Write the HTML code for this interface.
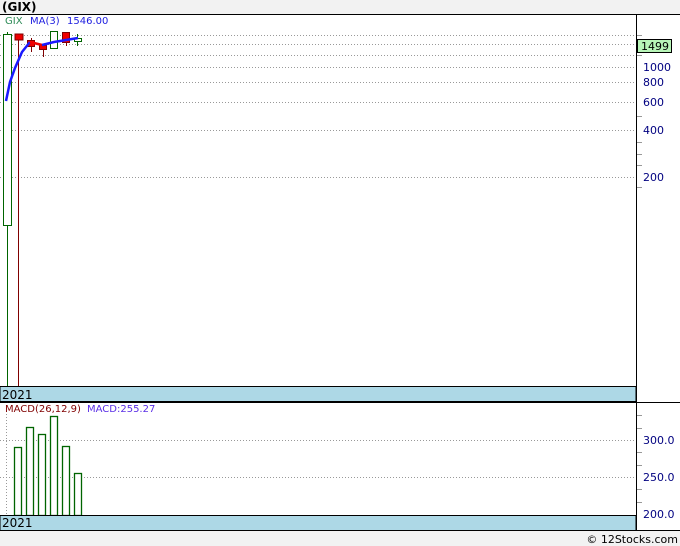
<!DOCTYPE html><html><head><style>html,body{margin:0;background:#f2f2f2;width:680px;height:546px;overflow:hidden}svg{display:block}</style></head><body>
<svg width="680" height="546" xmlns="http://www.w3.org/2000/svg" font-family="DejaVu Sans, sans-serif">
<rect x="0" y="0" width="680" height="546" fill="#f2f2f2"/>
<text x="2" y="11" font-size="12" font-weight="bold" fill="#000">(GIX)</text>
<rect x="0" y="14" width="680" height="516" fill="#fff"/>
<g stroke="#999" stroke-dasharray="1,2" stroke-width="1">
<line x1="0" x2="636" y1="35.5" y2="35.5"/><line x1="0" x2="636" y1="44.5" y2="44.5"/><line x1="0" x2="636" y1="55.5" y2="55.5"/><line x1="0" x2="636" y1="67.5" y2="67.5"/><line x1="0" x2="636" y1="82.5" y2="82.5"/><line x1="0" x2="636" y1="102.5" y2="102.5"/><line x1="0" x2="636" y1="130.5" y2="130.5"/><line x1="0" x2="636" y1="177.5" y2="177.5"/>
<line x1="0" x2="636" y1="440.5" y2="440.5"/><line x1="0" x2="636" y1="477.5" y2="477.5"/>
<line x1="6.5" x2="6.5" y1="402" y2="515"/>
</g>
<g stroke="#999"><line x1="636" x2="642" y1="35.5" y2="35.5"/><line x1="636" x2="642" y1="55.5" y2="55.5"/><line x1="636" x2="642" y1="116.5" y2="116.5"/><line x1="636" x2="642" y1="142.5" y2="142.5"/><line x1="636" x2="642" y1="154.5" y2="154.5"/><line x1="636" x2="642" y1="165.5" y2="165.5"/><line x1="636" x2="642" y1="187.5" y2="187.5"/>
<line x1="636" x2="642" y1="415.5" y2="415.5"/><line x1="636" x2="642" y1="428.5" y2="428.5"/><line x1="636" x2="642" y1="452.5" y2="452.5"/><line x1="636" x2="642" y1="465.5" y2="465.5"/><line x1="636" x2="642" y1="489.5" y2="489.5"/><line x1="636" x2="642" y1="502.5" y2="502.5"/></g>
<g font-size="11" fill="#000080">
<text x="643" y="71">1000</text><text x="643" y="86">800</text><text x="643" y="106">600</text><text x="643" y="134">400</text><text x="643" y="181">200</text>
<text x="643" y="444">300.0</text><text x="643" y="481">250.0</text><text x="643" y="518">200.0</text></g>
<rect x="637.5" y="39.5" width="34" height="13" fill="#b8f5b8" stroke="#000"/>
<text x="641" y="50" font-size="11" fill="#000">1499</text>
<text x="5" y="24" font-size="10" fill="#2e8b57">GIX</text>
<text x="30" y="24" font-size="10" fill="#2020e0">MA(3)</text>
<text x="67" y="24" font-size="10" fill="#2020e0">1546.00</text>
<line x1="7.5" x2="7.5" y1="32" y2="386" stroke="#006400"/>
<rect x="3.5" y="34.5" width="8" height="191" fill="#fff" stroke="#006400"/>
<line x1="18.5" x2="18.5" y1="34" y2="386" stroke="#800000"/>
<rect x="15" y="34" width="8" height="6" fill="#e00" stroke="#800000"/>
<line x1="31.5" x2="31.5" y1="38" y2="52" stroke="#800000"/>
<rect x="27.5" y="40.5" width="7" height="6" fill="#e00" stroke="#800000"/>
<line x1="43.5" x2="43.5" y1="44" y2="57" stroke="#800000"/>
<rect x="39.5" y="45.5" width="7" height="4" fill="#e00" stroke="#800000"/>
<rect x="50.5" y="31.5" width="7" height="17" fill="#fff" stroke="#006400"/>
<line x1="66.5" x2="66.5" y1="32" y2="46" stroke="#800000"/>
<rect x="62.5" y="32.5" width="7" height="10" fill="#e00" stroke="#800000"/>
<line x1="77.5" x2="77.5" y1="34" y2="46" stroke="#006400"/>
<rect x="74.5" y="38.5" width="7" height="3" fill="#fff" stroke="#006400"/>
<polyline points="6,101 10,82 15,68 22,52 30,42" fill="none" stroke="#1a1aff" stroke-width="2.5"/>
<polyline points="30,42 42,45" fill="none" stroke="#e00" stroke-width="2.5"/>
<polyline points="42,45 54,42 66,40 78,38" fill="none" stroke="#1a1aff" stroke-width="2.5"/>
<g fill="#fff" stroke="#006400" stroke-width="1.3">
<rect x="14.5" y="447.5" width="7" height="68"/><rect x="26.5" y="427.5" width="7" height="88"/><rect x="38.5" y="434.5" width="7" height="81"/><rect x="50.5" y="416.5" width="7" height="99"/><rect x="62.5" y="446.5" width="7" height="69"/><rect x="74.5" y="473.5" width="7" height="42"/></g>
<text x="5" y="412" font-size="10" fill="#800000">MACD(26,12,9)</text>
<text x="87" y="412" font-size="10" fill="#5a2ee6">MACD:255.27</text>
<rect x="0" y="386.5" width="636" height="15" fill="#add8e6" stroke="#000"/>
<text x="2" y="399" font-size="12" fill="#000">2021</text>
<rect x="0" y="515.5" width="636" height="15" fill="#add8e6" stroke="#000"/>
<text x="2" y="527" font-size="12" fill="#000">2021</text>
<line x1="0" x2="680" y1="14.5" y2="14.5" stroke="#000"/>
<line x1="0" x2="680" y1="402.5" y2="402.5" stroke="#000"/>
<line x1="0" x2="680" y1="530.5" y2="530.5" stroke="#000"/>
<line x1="636.5" x2="636.5" y1="14" y2="530" stroke="#000"/>
<text x="678" y="543" font-size="11" fill="#000" text-anchor="end">© 12Stocks.com</text>
</svg></body></html>
